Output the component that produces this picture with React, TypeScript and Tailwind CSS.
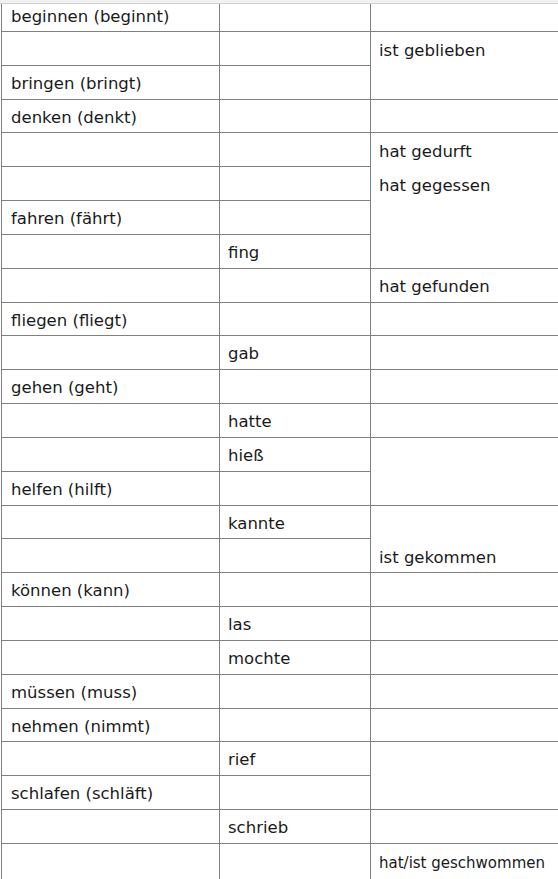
import React from "react";

const col1: Record<number, string> = {
  0: "beginnen (beginnt)",
  2: "bringen (bringt)",
  3: "denken (denkt)",
  6: "fahren (fährt)",
  9: "fliegen (fliegt)",
  11: "gehen (geht)",
  14: "helfen (hilft)",
  17: "können (kann)",
  20: "müssen (muss)",
  21: "nehmen (nimmt)",
  23: "schlafen (schläft)",
};

const col2: Record<number, string> = {
  7: "fing",
  10: "gab",
  12: "hatte",
  13: "hieß",
  15: "kannte",
  18: "las",
  19: "mochte",
  22: "rief",
  24: "schrieb",
};

type C3 = { start: number; span: number; lines: string[]; small?: boolean };
const col3: C3[] = [
  { start: 0, span: 1, lines: [""] },
  { start: 1, span: 2, lines: ["ist geblieben"] },
  { start: 3, span: 1, lines: [""] },
  { start: 4, span: 4, lines: ["hat gedurft", "hat gegessen"] },
  { start: 8, span: 1, lines: ["hat gefunden"] },
  { start: 9, span: 1, lines: [""] },
  { start: 10, span: 1, lines: [""] },
  { start: 11, span: 1, lines: [""] },
  { start: 12, span: 1, lines: [""] },
  { start: 13, span: 2, lines: [""] },
  { start: 15, span: 2, lines: ["", "ist gekommen"] },
  { start: 17, span: 1, lines: [""] },
  { start: 18, span: 1, lines: [""] },
  { start: 19, span: 1, lines: [""] },
  { start: 20, span: 1, lines: [""] },
  { start: 21, span: 1, lines: [""] },
  { start: 22, span: 2, lines: [""] },
  { start: 24, span: 1, lines: [""] },
  { start: 25, span: 1, lines: ["hat/ist geschwommen"], small: true },
];

const ROWS = 26;

export default function App() {
  const cells: React.ReactNode[] = [];
  for (let r = 0; r < ROWS; r++) {
    const pad = r === 0 ? "" : "pt-[4px]";
    cells.push(
      <div
        key={`a${r}`}
        className={`bg-white flex items-center pl-[9px] whitespace-nowrap ${pad}`}
        style={{ gridColumn: 1, gridRow: r + 1 }}
      >
        {col1[r] ?? ""}
      </div>
    );
    cells.push(
      <div
        key={`b${r}`}
        className={`bg-white flex items-center pl-[8px] whitespace-nowrap ${pad}`}
        style={{ gridColumn: 2, gridRow: r + 1 }}
      >
        {col2[r] ?? ""}
      </div>
    );
  }
  col3.forEach((c) => {
    cells.push(
      <div
        key={`c${c.start}`}
        className={`bg-white flex flex-col pl-[8px] whitespace-nowrap ${c.small ? "text-[15px]" : ""}`}
        style={{ gridColumn: 3, gridRow: `${c.start + 1} / span ${c.span}` }}
      >
        {c.lines.map((l, i) => (
          <div
            key={i}
            className={`${c.start === 0 ? "h-[27px]" : "h-[33.84px] pt-[4px]"} shrink-0 flex items-center`}
          >
            {l}
          </div>
        ))}
      </div>
    );
  });

  return (
    <div
      className="w-[558px] h-[879px] overflow-hidden bg-white text-[#1a1a1a] text-[16.5px]"
      style={{ fontFamily: '"DejaVu Sans", Verdana, sans-serif' }}
    >
      <div className="h-[3px] bg-[#f1f1f1]" />
      <div className="h-px bg-[#cfcfcf]" />
      <div className="ml-px w-[600px]">
        <div className="grid grid-cols-[217px_150px_230px] grid-rows-[27px_repeat(24,32.84px)_40px] gap-px pl-px bg-[#808080]">
          {cells}
        </div>
      </div>
    </div>
  );
}
